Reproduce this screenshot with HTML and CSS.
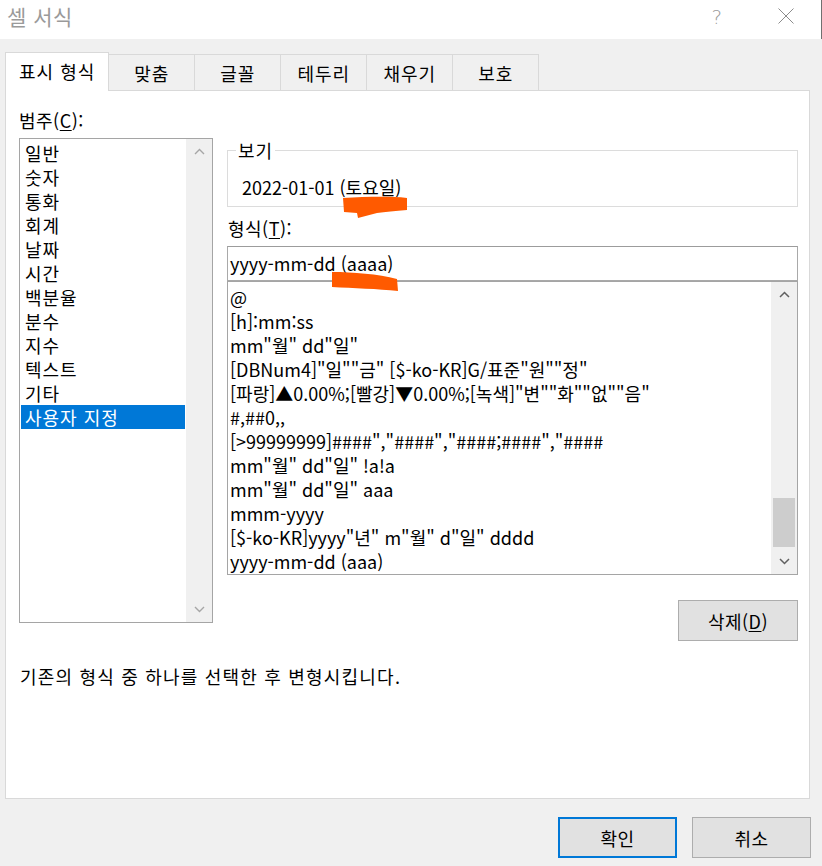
FILE: index.html
```html
<!DOCTYPE html>
<html lang="ko">
<head>
<meta charset="utf-8">
<title>셀 서식</title>
<link rel="stylesheet" href="styles.css">
</head>
<body>
<header class="titlebar">
  <span class="title">셀 서식</span>
  <span class="help">?</span>
  <span class="close"><svg width="16" height="16" viewBox="0 0 16 16"><path d="M0.5 0.5 L15.5 15.5 M15.5 0.5 L0.5 15.5" stroke="#8c8c8c" stroke-width="1" fill="none"/></svg></span>
</header>
<nav class="tabs">
  <div class="tab active">표시 형식</div>
  <div class="tab">맞춤</div>
  <div class="tab">글꼴</div>
  <div class="tab">테두리</div>
  <div class="tab">채우기</div>
  <div class="tab">보호</div>
</nav>
<section class="panel">
  <div class="main">
    <div class="left">
      <div class="label">범주(<u>C</u>):</div>
      <div class="listbox category">
        <ul class="items">
          <li>일반</li>
          <li>숫자</li>
          <li>통화</li>
          <li>회계</li>
          <li>날짜</li>
          <li>시간</li>
          <li>백분율</li>
          <li>분수</li>
          <li>지수</li>
          <li>텍스트</li>
          <li>기타</li>
          <li class="selected">사용자 지정</li>
        </ul>
        <div class="scrollbar disabled">
          <div class="arrow"><svg width="11" height="7" viewBox="0 0 11 7"><polyline points="1,6 5.5,1.5 10,6" fill="none" stroke="#a6a6a6" stroke-width="1.4"/></svg></div>
          <div class="track"></div>
          <div class="arrow"><svg width="11" height="7" viewBox="0 0 11 7"><polyline points="1,1 5.5,5.5 10,1" fill="none" stroke="#a6a6a6" stroke-width="1.4"/></svg></div>
        </div>
      </div>
    </div>
    <div class="right">
      <div class="groupbox">
        <span class="legend">보기</span>
        <div class="sample">2022-01-01 (토요일)</div>
      </div>
      <div class="label field-label">형식(<u>T</u>):</div>
      <div class="input">yyyy-mm-dd (aaaa)</div>
      <div class="listbox formats">
        <ul class="items">
          <li>@</li>
          <li>[h]:mm:ss</li>
          <li>mm"월" dd"일"</li>
          <li>[DBNum4]"일""금" [$-ko-KR]G/표준"원""정"</li>
          <li>[파랑]▲0.00%;[빨강]▼0.00%;[녹색]"변""화""없""음"</li>
          <li>#,##0,,</li>
          <li>[&gt;99999999]####","####","####;####","####</li>
          <li>mm"월" dd"일" !a!a</li>
          <li>mm"월" dd"일" aaa</li>
          <li>mmm-yyyy</li>
          <li>[$-ko-KR]yyyy"년" m"월" d"일" dddd</li>
          <li>yyyy-mm-dd (aaa)</li>
        </ul>
        <div class="scrollbar">
          <div class="arrow"><svg width="11" height="7" viewBox="0 0 11 7"><polyline points="1,6 5.5,1.5 10,6" fill="none" stroke="#606060" stroke-width="1.5"/></svg></div>
          <div class="track"><div class="thumb"></div></div>
          <div class="arrow"><svg width="11" height="7" viewBox="0 0 11 7"><polyline points="1,1 5.5,5.5 10,1" fill="none" stroke="#606060" stroke-width="1.5"/></svg></div>
        </div>
      </div>
      <div class="btnrow"><button class="btn delete">삭제(<u>D</u>)</button></div>
    </div>
  </div>
  <p class="desc">기존의 형식 중 하나를 선택한 후 변형시킵니다.</p>
</section>
<footer class="footer">
  <button class="btn default">확인</button>
  <button class="btn">취소</button>
</footer>
<svg class="mark mark1" width="72" height="28" viewBox="0 0 72 28"><path d="M3 4 C 25 3, 48 2, 67 4 L 67 16 C 55 17, 45 18, 37 19 L 18 24 L 17 19 L 4 18 Z" fill="#ff5a00"/></svg>
<svg class="mark mark2" width="74" height="26" viewBox="0 0 74 26"><path d="M4 4 C 25 4, 50 6, 69 11 L 70 23 C 50 21, 25 20, 4 19 Z" fill="#ff5a00"/></svg>
</body>
</html>
```

FILE: styles.css
```css
* { box-sizing: border-box; }
html, body { margin: 0; padding: 0; }
body {
  width: 822px;
  height: 866px;
  background: #f0f0f0;
  font-family: "Noto Sans CJK KR", sans-serif;
  font-size: 18px;
  color: #000;
  position: relative;
  overflow: hidden;
}
ul { list-style: none; margin: 0; padding: 0; }
u { text-decoration: underline; text-underline-offset: 2px; text-decoration-thickness: 1px; }

/* title bar */
.titlebar {
  height: 39px;
  background: #fff;
  display: flex;
  align-items: center;
  border-right: 1px solid #707070;
}
.title {
  margin-left: 7px;
  margin-top: -8px;
  font-size: 21px;
  letter-spacing: 0.5px;
  color: #9a9a9a;
}
.help {
  margin-left: auto;
  margin-right: 56px;
  margin-top: -6px;
  font-family: "DejaVu Sans", sans-serif;
  font-weight: 200;
  font-size: 20px;
  color: #9a9a9a;
}
.close {
  display: flex;
  margin-right: 27px;
  margin-top: -7px;
}

/* tabs */
.tabs {
  height: 51px;
  display: flex;
  align-items: flex-end;
  padding-left: 5px;
}
.tab {
  height: 36px;
  min-width: 87px;
  padding: 0 15px;
  margin-right: -1px;
  border: 1px solid #d9d9d9;
  border-bottom: none;
  background: #f0f0f0;
  display: flex;
  align-items: center;
  justify-content: center;
  color: #000;
  letter-spacing: 1px;
}
.tab.active {
  height: 39px;
  padding: 0 13px 3px;
  margin-bottom: -1px;
  background: #fff;
  position: relative;
  z-index: 1;
}

/* panel */
.panel {
  margin-left: 5px;
  width: 805px;
  height: 709px;
  background: #fff;
  border: 1px solid #d9d9d9;
}
.main {
  display: flex;
  padding-left: 13px;
}
.left { width: 194px; }
.right { width: 571px; margin-left: 14px; padding-top: 59px; }
.label {
  margin-top: 17px;
  height: 24px;
  line-height: 24px;
  letter-spacing: 0.5px;
}

.listbox {
  display: flex;
  border: 1px solid #a5a5a5;
  background: #fff;
}
.listbox .items { flex: 1; }
.category {
  margin-top: 6px;
  height: 485px;
}
.category .items { padding-top: 2px; }
.category li {
  margin: 0 1px;
  padding-left: 4px;
  height: 24px;
  line-height: 24px;
  white-space: nowrap;
  letter-spacing: 1px;
}
.category li.selected {
  background: #0078d7;
  color: #fff;
}
.scrollbar {
  width: 26px;
  background: #f0f0f0;
  display: flex;
  flex-direction: column;
}
.scrollbar .arrow {
  height: 25px;
  display: flex;
  align-items: center;
  justify-content: center;
}
.scrollbar .track { flex: 1; display: flex; flex-direction: column; align-items: center; }
.thumb {
  width: 22px;
  height: 49px;
  margin-top: 191px;
  background: #cdcdcd;
}

/* right column */
.groupbox {
  position: relative;
  height: 57px;
  border: 1px solid #dcdcdc;
  padding: 24px 0 0 14px;
}
.legend {
  position: absolute;
  left: 8px;
  top: -13px;
  padding: 0 2px;
  background: #fff;
  line-height: 24px;
  letter-spacing: 1px;
}
.sample { line-height: 24px; }
.field-label { margin-top: 9px; padding-left: 1px; }
.input {
  margin-top: 6px;
  height: 35px;
  border: 1px solid #a9a9a9;
  border-top-color: #9c9c9c;
  padding-left: 2px;
  line-height: 33px;
  white-space: nowrap;
}
.formats {
  height: 294px;
}
.formats .items { padding: 3px 0 0 2px; overflow: hidden; }
.formats li {
  height: 24px;
  line-height: 24px;
  white-space: nowrap;
}
.btnrow {
  margin-top: 25px;
  display: flex;
  justify-content: flex-end;
}

.btn {
  font-family: "Noto Sans CJK KR", sans-serif;
  font-size: 18px;
  color: #000;
  background: #e1e1e1;
  border: 1px solid #adadad;
  height: 41px;
  width: 120px;
  padding: 0;
  margin: 0;
  line-height: 24px;
  letter-spacing: 0.5px;
}
.btn.default {
  border: 1px solid #0078d7;
  box-shadow: inset 0 0 0 1px #0078d7;
}

.desc {
  margin: 23px 0 0 14px;
  line-height: 24px;
  letter-spacing: 1.2px;
}

.footer {
  margin-top: 18px;
  display: flex;
  justify-content: flex-end;
  gap: 15px;
  padding-right: 11px;
}
.footer .btn { width: 119px; }

/* hand-drawn highlight marks */
.mark { position: absolute; }
.mark1 { left: 340px; top: 194px; }
.mark2 { left: 328px; top: 268px; }
```
